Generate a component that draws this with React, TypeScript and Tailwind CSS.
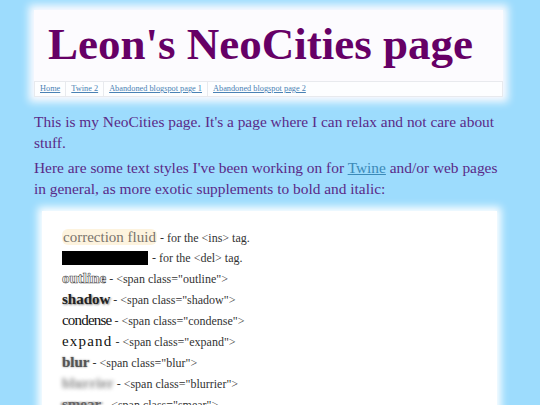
export default function App() {
  const serif = { fontFamily: '"Liberation Serif", "Times New Roman", serif' };
  return (
    <div className="h-[405px] bg-[#9ddcfd] pt-[10px] overflow-hidden" style={serif}>
      <div className="ml-[34px] w-[469px]">
        <header className="bg-[#fcfbfe] shadow-[0_0_8px_5px_#fcfbfe]">
          <h1 className="pt-[6px] pl-[14px] text-[45px] leading-[56px] font-bold text-[#660066]">
            Leon's NeoCities page
          </h1>
          <nav className="mt-[9px] flex border border-[#e8eaee] bg-[#fdfeff] text-[8.3px] leading-[14px]">
            {["Home", "Twine 2", "Abandoned blogspot page 1", "Abandoned blogspot page 2"].map((t, i) => (
              <a
                key={t}
                href="#"
                className={"px-[5px] text-[#4a82b4] underline " + (i < 3 ? "border-r border-[#e8eaee]" : "")}
              >
                {t}
              </a>
            ))}
          </nav>
        </header>

        <div className="mt-[14px] text-[15.4px] leading-[21px] text-[#5a2a88]">
          <p>This is my NeoCities page. It's a page where I can relax and not care about stuff.</p>
          <p className="mt-[4px]">
            Here are some text styles I've been working on for{" "}
            <a href="#" className="text-[#3b8ab8] underline">Twine</a> and/or web pages in general, as more exotic supplements to bold and italic:
          </p>
        </div>
      </div>

      <div className="mt-[12px] ml-[42px] w-[455px] bg-white shadow-[0_0_8px_4px_#ffffff] pt-[16px] pl-[20px] pb-[20px] text-[#333] text-[12px] leading-[20px]">
        <div>
          <span className="rounded-md bg-[#fdf3de] px-[1px] text-[15px] text-[#7a746c]">correction fluid</span> - for the &lt;ins&gt; tag.
        </div>
        <div className="flex items-center">
          <span className="inline-block h-[14px] w-[86px] bg-black" /> <span className="ml-[4px]">- for the &lt;del&gt; tag.</span>
        </div>
        <div>
          <span className="text-[15px] font-bold text-white [-webkit-text-stroke:0.6px_#444]">outline</span> - &lt;span class="outline"&gt;
        </div>
        <div>
          <span className="text-[15px] font-bold text-[#222] [text-shadow:1px_1px_2px_#888]">shadow</span> - &lt;span class="shadow"&gt;
        </div>
        <div>
          <span className="text-[15px] tracking-[-0.8px] text-[#111]">condense</span> - &lt;span class="condense"&gt;
        </div>
        <div>
          <span className="text-[15px] tracking-[1.2px] text-[#111]">expand</span> - &lt;span class="expand"&gt;
        </div>
        <div>
          <span className="text-[15px] font-bold text-[#555] [text-shadow:0_0_2px_#777]">blur</span> - &lt;span class="blur"&gt;
        </div>
        <div>
          <span className="text-[15px] font-bold text-transparent [text-shadow:0_0_4px_#888]">blurrier</span> - &lt;span class="blurrier"&gt;
        </div>
        <div>
          <span className="text-[15px] font-bold text-[#666] [text-shadow:-2px_0_2px_#aaa,2px_0_2px_#aaa]">smear</span> - &lt;span class="smear"&gt;
        </div>
      </div>
    </div>
  );
}
